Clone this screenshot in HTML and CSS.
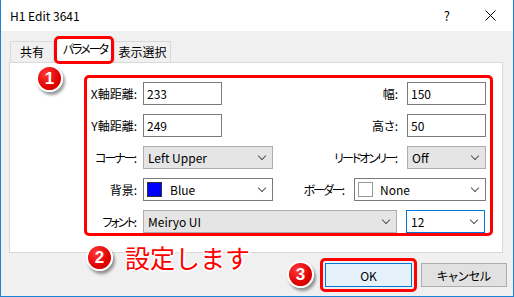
FILE: index.html
```html
<!DOCTYPE html>
<html lang="ja">
<head>
    <meta charset="UTF-8">
    <meta name="viewport" content="width=device-width, initial-scale=1.0">
    <title>H1 Edit 3641</title>
    <link rel="stylesheet" href="styles.css">
</head>
<body>
    <!-- ダイアログ -->
    <div class="window">
        <div class="titlebar">
            <span class="title">H1 Edit 3641</span>
            <span class="help">?</span>
            <span class="close">
                <svg width="11" height="11" viewBox="0 0 11 11"><path d="M0.5 0.5L10.5 10.5M10.5 0.5L0.5 10.5" stroke="#000" stroke-width="1"/></svg>
            </span>
        </div>

        <div class="body">
            <div class="tabs">
                <div class="tab">共有</div>
                <div class="tab tab-active"><span class="narrow">パラメータ</span></div>
                <div class="tab tab-wide">表示選択</div>
            </div>

            <div class="panel">
                <div class="form">
                    <div class="row">
                        <span class="lbl">X軸距離:</span>
                        <div class="field input w79">233</div>
                        <div class="right">
                            <span class="lbl-r">幅:</span>
                            <div class="field input w79">150</div>
                        </div>
                    </div>
                    <div class="row">
                        <span class="lbl">Y軸距離:</span>
                        <div class="field input w79">249</div>
                        <div class="right">
                            <span class="lbl-r">高さ:</span>
                            <div class="field input w79">50</div>
                        </div>
                    </div>
                    <div class="row">
                        <span class="lbl narrow">コーナー:</span>
                        <div class="field combo w130"><span>Left Upper</span><i class="chev"></i></div>
                        <div class="right">
                            <span class="lbl-r narrow">リードオンリー:</span>
                            <div class="field combo w79"><span>Off</span><i class="chev"></i></div>
                        </div>
                    </div>
                    <div class="row">
                        <span class="lbl">背景:</span>
                        <div class="field combo combo-white w130">
                            <span class="swatch-wrap"><b class="swatch swatch-blue"></b>Blue</span><i class="chev"></i>
                        </div>
                        <div class="right">
                            <span class="lbl-r narrow">ボーダー:</span>
                            <div class="field combo combo-white w132">
                                <span class="swatch-wrap"><b class="swatch swatch-none"></b>None</span><i class="chev"></i>
                            </div>
                        </div>
                    </div>
                    <div class="row">
                        <span class="lbl narrow">フォント:</span>
                        <div class="field combo w254"><span>Meiryo UI</span><i class="chev"></i></div>
                        <div class="field combo combo-focus w79 size-box"><span>12</span><i class="chev"></i></div>
                    </div>
                </div>
            </div>

            <div class="footer">
                <div class="ok-wrap"><button class="btn btn-ok">OK</button></div>
                <button class="btn">キャンセル</button>
            </div>
        </div>

        <!-- 注釈 -->
        <span class="badge badge-1">1</span>
        <div class="note">
            <span class="badge">2</span>
            <span class="note-text">設定します</span>
        </div>
        <span class="badge badge-3">3</span>
    </div>
</body>
</html>
```

FILE: styles.css
```css
/* 基本 */
body {
    margin: 0;
    font-family: 'Noto Sans CJK JP', sans-serif;
    font-size: 12px;
    color: #000;
    background: #fff;
}

.window {
    position: relative;
    width: 514px;
    height: 297px;
    box-sizing: border-box;
    border: 1px solid #1883d7;
    border-top: none;
    background: #f0f0f0;
    overflow: hidden;
    font-feature-settings: "palt";
}

/* カナの幅を詰める */
.narrow {
    letter-spacing: -2px;
}

/* タイトルバー */
.titlebar {
    height: 31px;
    background: #fff;
    display: flex;
    align-items: center;
    padding: 0 17px 0 9px;
}

.title {
    font-size: 12px;
    line-height: 16px;
}

.help {
    margin-left: auto;
    font-size: 13px;
    line-height: 16px;
}

.close {
    display: flex;
    margin-left: 35px;
}

/* 本体 */
.body {
    padding: 5px 6px 0 8px;
}

.tabs {
    display: flex;
    align-items: flex-end;
    height: 26px;
    padding-left: 1px;
}

.tab {
    height: 21px;
    width: 44px;
    box-sizing: border-box;
    border: 1px solid #d9d9d9;
    border-bottom: none;
    background: #f0f0f0;
    display: flex;
    align-items: center;
    justify-content: center;
    line-height: 16px;
    white-space: nowrap;
}

.tab-wide {
    width: 57px;
}

.tab-active {
    position: relative;
    z-index: 1;
    width: 60px;
    height: 28px;
    margin-bottom: -2px;
    background: #fff;
    border: 3px solid #f00;
    border-radius: 5px;
    padding: 0 0 3px 2px;
}

.panel {
    width: 494px;
    height: 191px;
    box-sizing: border-box;
    border: 1px solid #d9d9d9;
    background: #fff;
}

/* フォーム */
.form {
    width: 409px;
    height: 161px;
    box-sizing: border-box;
    margin: 12px 0 0 74px;
    border: 3px solid #f00;
    border-radius: 5px;
    padding: 4px 4px 0 0;
    display: flex;
    flex-direction: column;
    gap: 9px;
}

.row {
    display: flex;
    align-items: center;
    height: 23px;
}

.lbl {
    flex: none;
    width: 50px;
    margin-right: 6px;
    text-align: right;
    white-space: nowrap;
    direction: rtl;
    unicode-bidi: plaintext;
}

.lbl.narrow {
    margin-right: 8px;
    width: 48px;
}

.right {
    margin-left: auto;
    display: flex;
    align-items: center;
}

.lbl-r {
    margin-right: 9px;
    white-space: nowrap;
}

.lbl-r.narrow {
    margin-right: 11px;
}

.field {
    flex: none;
    height: 23px;
    box-sizing: border-box;
    line-height: 21px;
}

.w79 { width: 79px; }
.w130 { width: 130px; }
.w132 { width: 132px; }
.w254 { width: 254px; }

.size-box {
    margin-left: 9px;
}

.input {
    border: 1px solid #7a7a7a;
    background: #fff;
    padding-left: 3px;
}

.combo {
    border: 1px solid #adadad;
    background: #e5e5e5;
    padding: 0 7px 0 4px;
    display: flex;
    align-items: center;
    justify-content: space-between;
}

.combo-white {
    border-color: #7a7a7a;
    background: #fff;
    padding-left: 3px;
}

.combo-focus {
    border-color: #0078d7;
    background: #fff;
}

.chev {
    width: 5px;
    height: 5px;
    border-right: 1px solid #555;
    border-bottom: 1px solid #555;
    transform: rotate(45deg);
    margin-top: -4px;
}

.swatch-wrap {
    display: flex;
    align-items: center;
}

.swatch {
    width: 15px;
    height: 15px;
    box-sizing: border-box;
    margin-right: 8px;
}

.swatch-blue {
    background: #0000ff;
    border: 1px solid #333;
}

.swatch-none {
    background: #fff;
    border: 1px solid #999;
    margin-right: 7px;
}

/* ボタン */
.footer {
    margin-top: 5px;
    display: flex;
    justify-content: flex-end;
    align-items: center;
    gap: 4px;
}

.ok-wrap {
    border: 3px solid #f00;
    border-radius: 5px;
    padding: 2px;
}

.btn {
    display: block;
    width: 86px;
    height: 24px;
    margin: 0;
    padding: 0;
    border: 1px solid #adadad;
    background: #e1e1e1;
    font-family: 'Noto Sans CJK JP', sans-serif;
    font-size: 12px;
    font-feature-settings: "palt";
    color: #000;
}

.btn-ok {
    width: 87px;
    border-color: #0078d7;
    background: #e5f1fb;
}

/* 注釈 */
.badge {
    position: absolute;
    width: 27px;
    height: 27px;
    box-sizing: border-box;
    border-radius: 50%;
    border: 2px solid #fff;
    background: radial-gradient(circle at 35% 30%, #ff3a3a, #e00000 60%, #c80000);
    box-shadow: 2px 3px 3px rgba(0, 0, 0, 0.4);
    color: #fff;
    font-family: 'Liberation Sans', Arial, sans-serif;
    font-weight: bold;
    font-size: 17px;
    line-height: 23px;
    text-align: center;
}

.badge-1 {
    left: 35px;
    top: 65px;
}

.badge-3 {
    left: 286px;
    top: 261px;
}

.note {
    position: absolute;
    left: 85px;
    top: 243px;
    display: flex;
    align-items: center;
    height: 28px;
}

.note .badge {
    position: static;
    flex: none;
}

.note-text {
    margin-left: 12px;
    font-size: 25px;
    line-height: 28px;
    color: #f00;
    font-feature-settings: normal;
    text-shadow:
        1px 1px 0 #fff, -1px -1px 0 #fff, 1px -1px 0 #fff, -1px 1px 0 #fff,
        2px 0 0 #fff, -2px 0 0 #fff, 0 2px 0 #fff, 0 -2px 0 #fff;
}
```
